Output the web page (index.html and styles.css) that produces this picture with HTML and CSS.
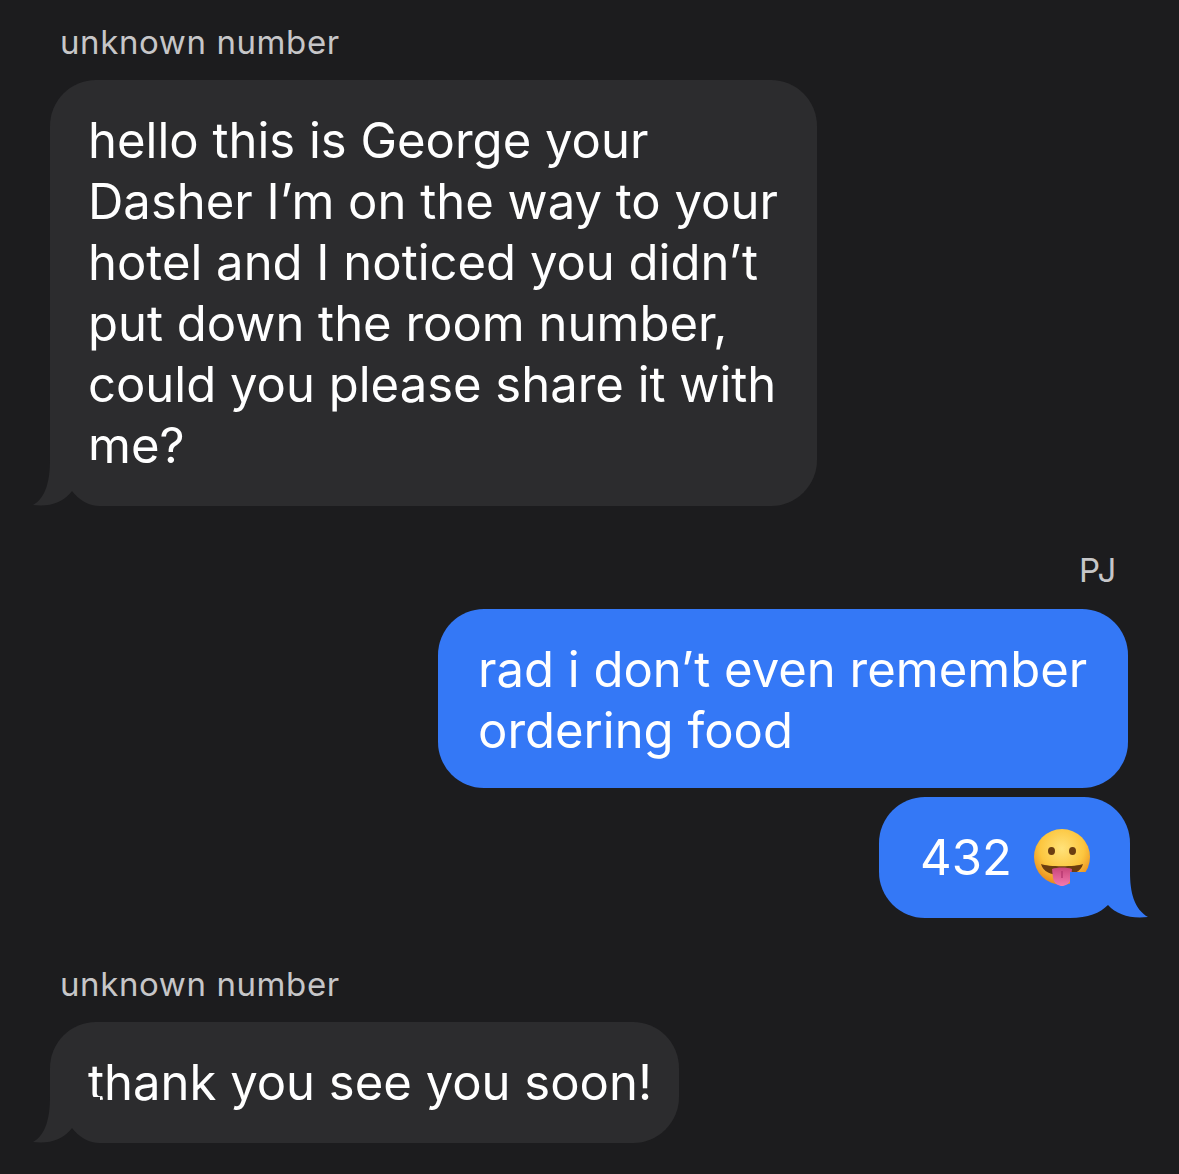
FILE: index.html
```html
<!DOCTYPE html>
<html lang="en">
<head>
    <meta charset="UTF-8">
    <meta name="viewport" content="width=device-width, initial-scale=1.0">
    <title>Messages</title>
    <link rel="stylesheet" href="styles.css">
</head>
<body>
    <div class="thread">
        <div class="sender sender-first">unknown number</div>
        <div class="bubble incoming bubble-george">
            hello this is George your<br>
            Dasher I’m on the way to your<br>
            hotel and I noticed you didn’t<br>
            put down the room number,<br>
            could you please share it with<br>
            me?
            <svg class="tail tail-left" width="67" height="46" viewBox="0 0 67 46"><path d="M17 0 C17 20 13 38 0 45 C16 47 30 43 39 31 C46 40 56 46 67 46 L67 0 Z"/></svg>
        </div>

        <div class="sender sender-me">PJ</div>
        <div class="bubble outgoing bubble-rad">
            rad i don’t even remember<br>
            ordering food
        </div>
        <div class="bubble outgoing bubble-code">
            <span>432</span>
            <svg class="emoji" width="60" height="60" viewBox="0 0 60 60">
                <defs>
                    <radialGradient id="face" cx="50%" cy="35%" r="65%">
                        <stop offset="0" stop-color="#ffe27a"/>
                        <stop offset="0.6" stop-color="#fcc63f"/>
                        <stop offset="1" stop-color="#e8891c"/>
                    </radialGradient>
                    <linearGradient id="tongue" x1="0" y1="0" x2="0" y2="1">
                        <stop offset="0" stop-color="#c9467a"/>
                        <stop offset="1" stop-color="#f47ab0"/>
                    </linearGradient>
                </defs>
                <circle cx="30" cy="29" r="28" fill="url(#face)"/>
                <ellipse cx="19.500" cy="23" rx="3.500" ry="4" fill="#6b3d10"/>
                <ellipse cx="40.500" cy="23" rx="3.500" ry="4" fill="#6b3d10"/>
                <path d="M9 36 C16 39 44 39 51 36 C49 44 41 47 30 47 C19 47 11 44 9 36 Z" fill="#6b3d10"/>
                <path d="M20 41 C25 39 35 39 40 41 L39 50 C38 56 33 58 30 58 C27 58 22 56 21 50 Z" fill="url(#tongue)"/>
                <path d="M30 43 L30 50" stroke="#b83a72" stroke-width="1.500" fill="none"/>
            </svg>
            <svg class="tail tail-right" width="78" height="46" viewBox="0 0 78 46"><path d="M60 0 C60 20 64 37 78 45 C61 47 47 43 38 33 C30 41 18 46 0 46 L0 0 Z"/></svg>
        </div>

        <div class="sender sender-last">unknown number</div>
        <div class="bubble incoming bubble-thanks">
            thank you see you soon!
            <svg class="tail tail-left" width="67" height="46" viewBox="0 0 67 46"><path d="M17 0 C17 20 13 38 0 45 C16 47 30 43 39 31 C46 40 56 46 67 46 L67 0 Z"/></svg>
        </div>
    </div>
</body>
</html>
```

FILE: styles.css
```css
body {
    margin: 0;
    background-color: #1c1c1e;
    font-family: Inter, "Liberation Sans", sans-serif;
    overflow: hidden;
}
.thread {
    display: flex;
    flex-direction: column;
    height: 1174px;
    padding-top: 22px;
    box-sizing: border-box;
}
.sender {
    color: #c6c6c8;
    font-size: 33px;
    line-height: 40px;
    letter-spacing: 0.6px;
}
.sender-first {
    margin-left: 60px;
    margin-bottom: 18px;
}
.sender-me {
    align-self: flex-end;
    margin-top: 44px;
    margin-right: 62px;
    margin-bottom: 19px;
}
.sender-last {
    margin-top: 46px;
    margin-left: 60px;
    margin-bottom: 18px;
}
.bubble {
    position: relative;
    box-sizing: border-box;
    color: #ffffff;
    font-size: 49px;
    line-height: 61px;
    border-radius: 46px;
    white-space: nowrap;
}
.incoming {
    align-self: flex-start;
    margin-left: 50px;
    padding: 30px 0 30px 38px;
    background-color: #2c2c2e;
    border-bottom-left-radius: 0;
}
.outgoing {
    align-self: flex-end;
    background-color: #3478f6;
}
.bubble-george {
    width: 767px;
}
.bubble-rad {
    width: 690px;
    margin-right: 51px;
    padding: 30px 0 27px 40px;
}
.bubble-code {
    display: flex;
    align-items: center;
    gap: 20px;
    width: 251px;
    margin-top: 9px;
    margin-right: 49px;
    padding: 30px 0 30px 41px;
    border-bottom-right-radius: 0;
}
.bubble-thanks {
    width: 629px;
}
.emoji {
    flex: none;
    margin: -2px 0 -2px 0;
}
.tail {
    position: absolute;
    bottom: 0;
    display: block;
    background-color: #1c1c1e;
}
.tail-left {
    left: -17px;
}
.tail-left path {
    fill: #2c2c2e;
}
.tail-right {
    right: -18px;
}
.tail-right path {
    fill: #3478f6;
}
```
